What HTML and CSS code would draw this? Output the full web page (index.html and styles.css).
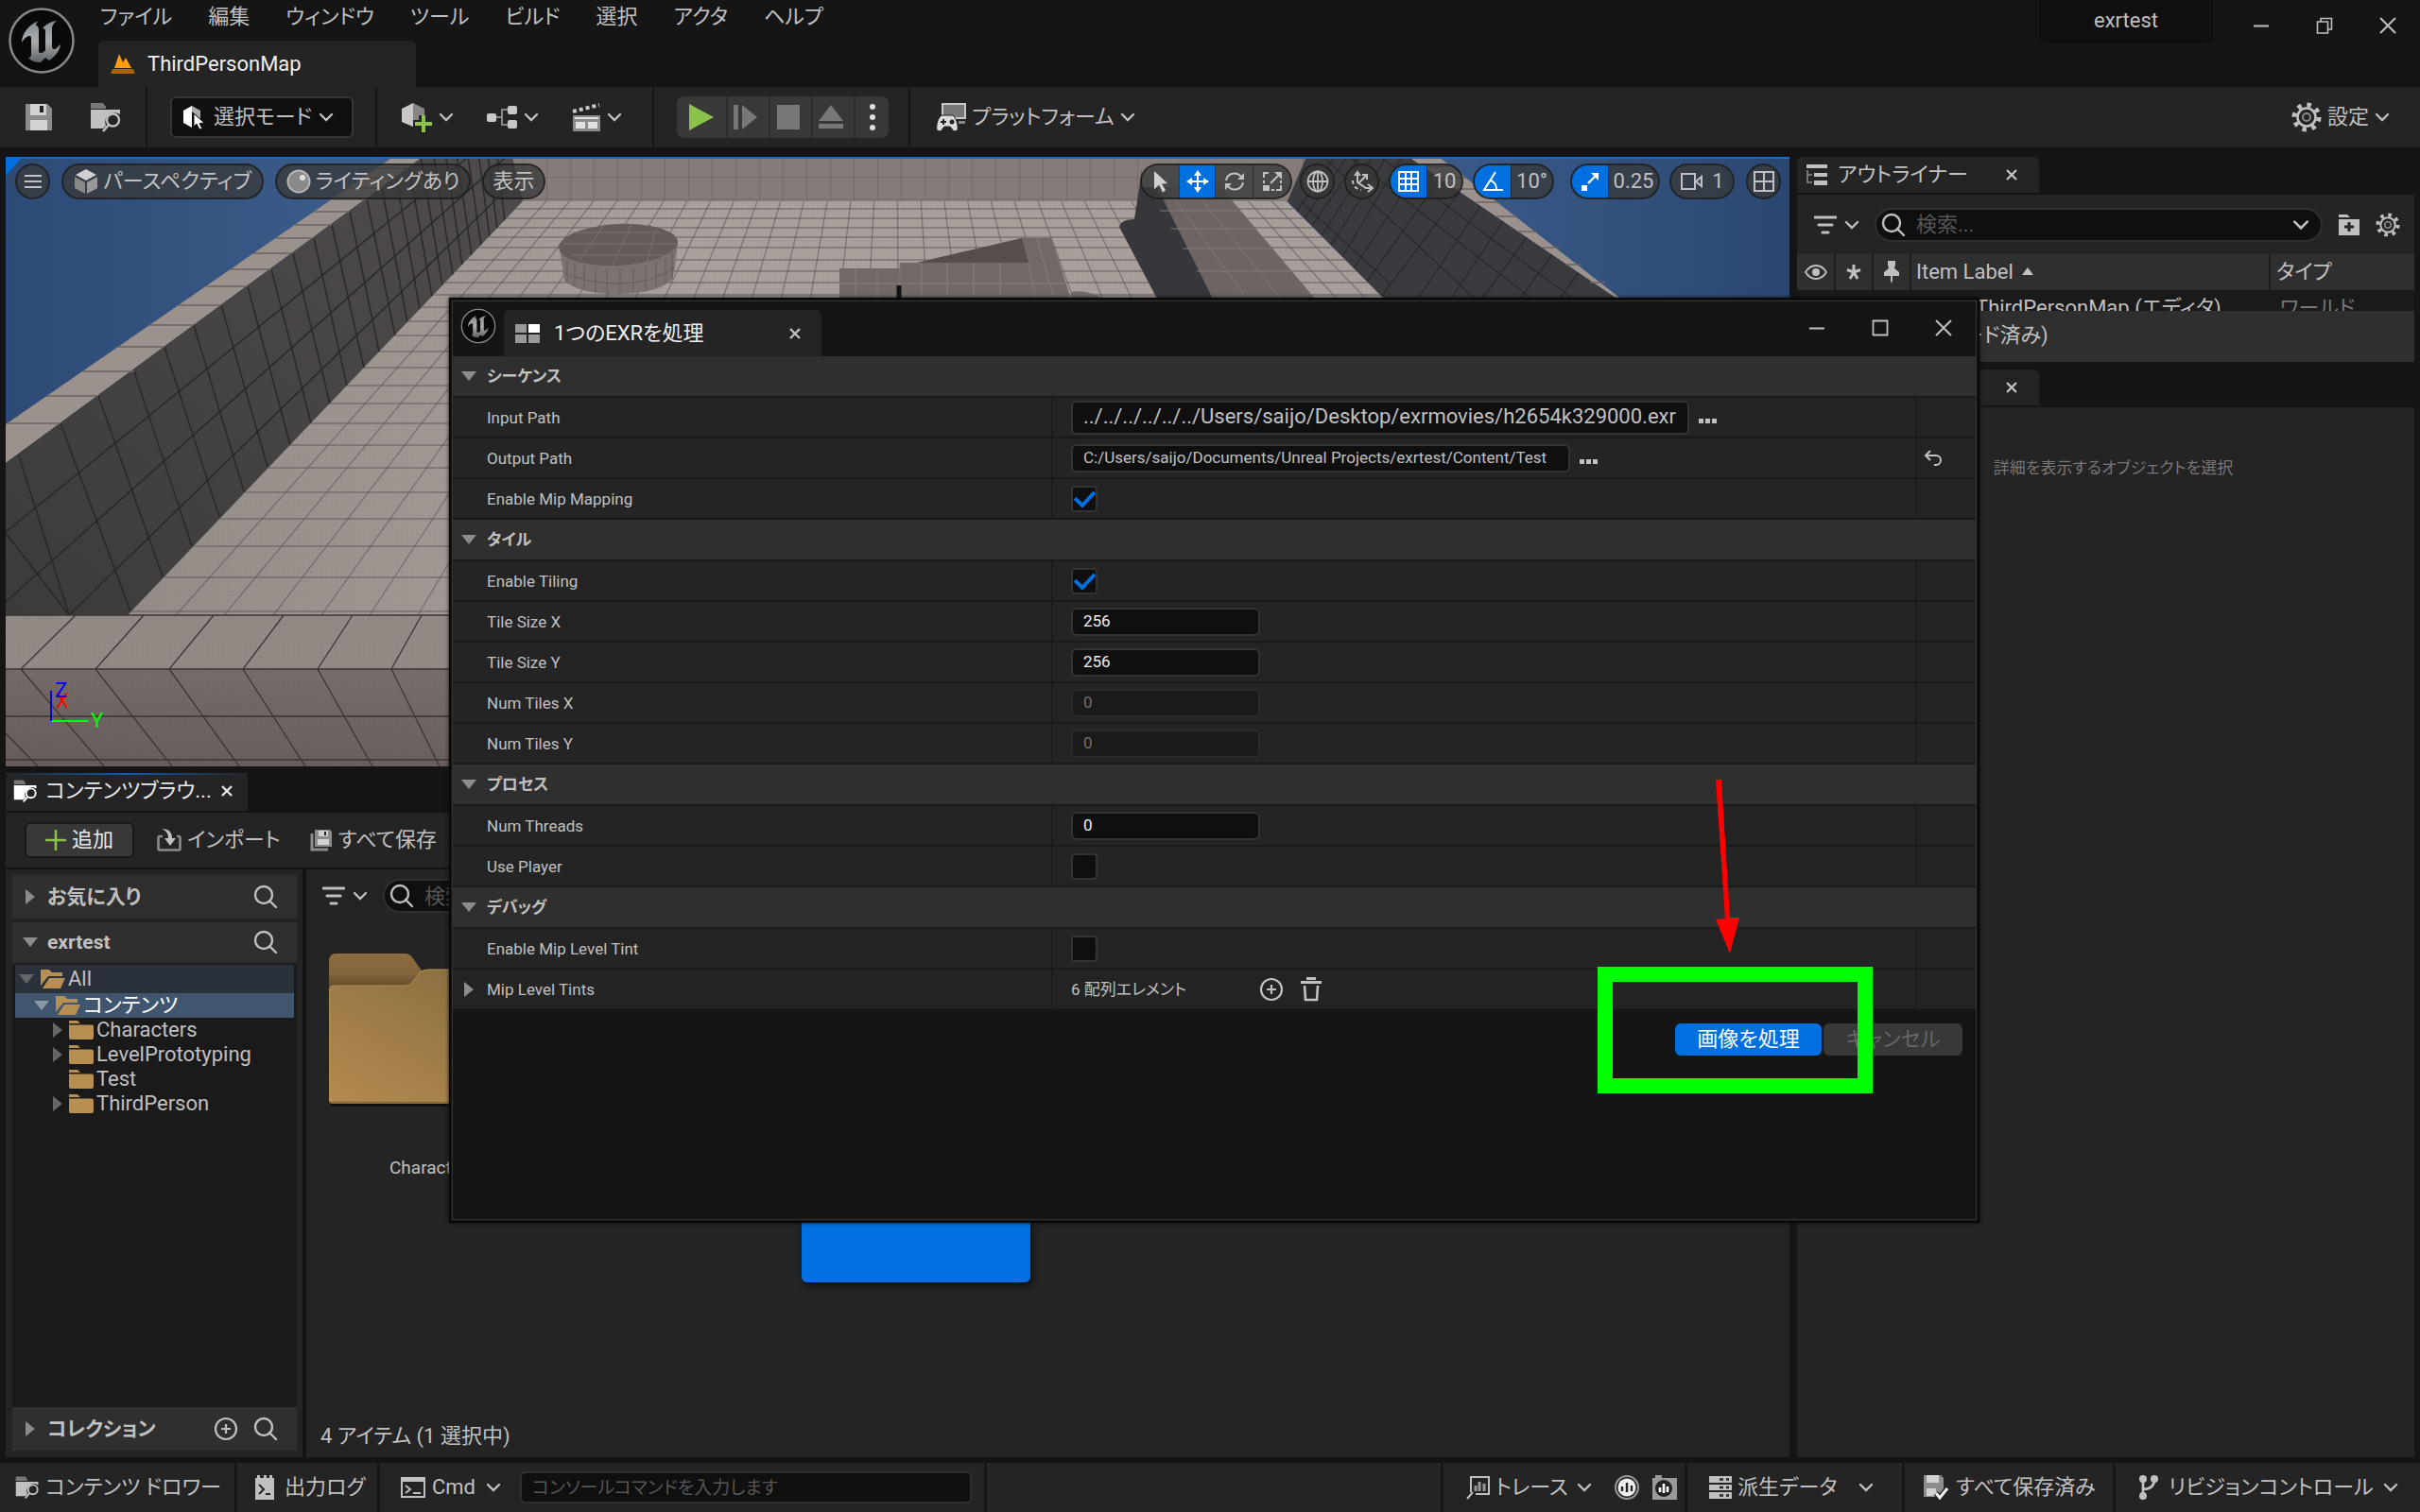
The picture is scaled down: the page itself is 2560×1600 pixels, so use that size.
FILE: index.html
```html
<!DOCTYPE html>
<html lang="ja">
<head>
<meta charset="utf-8">
<title>exrtest</title>
<link rel="stylesheet" href="styles.css">
</head>
<body>
<svg class="defs" aria-hidden="true">
  <defs>
    <linearGradient id="metal" x1="0" y1="0" x2="0" y2="1"><stop offset="0" stop-color="#868b8e"/><stop offset=".5" stop-color="#a9adaf"/><stop offset="1" stop-color="#5c6164"/></linearGradient>
  </defs>
  <symbol id="i-logo" viewBox="0 0 72 72">
    <circle cx="36" cy="36" r="33.500" fill="#090909" stroke="#85898b" stroke-width="2.500"/>
    <path fill="url(#metal)" d="M33 15C22 19 15 29 15 38c3-5 6-7 8-7 2 0 2 1 2 4v15c0 3-1 4-3 4 3 4 8 5 13 5l5-5 4 3c6-4 11-10 12-17-3 3-5 5-7 5-1 0-2-1-2-3V23c0-3 2-6 5-8-7 1-12 4-15 8 2 0 3 1 3 3v20c-1 2-3 3-5 3-2 0-2-1-2-3V25c0-4-2-5-3-5 0-2 1-4 3-5z"/>
  </symbol>
  <symbol id="i-chev" viewBox="0 0 16 16"><path d="M2 5l6 6 6-6" fill="none" stroke="currentColor" stroke-width="2.400" stroke-linecap="round"/></symbol>
  <symbol id="i-x" viewBox="0 0 16 16"><path d="M3 3l10 10M13 3L3 13" stroke="currentColor" stroke-width="2.400"/></symbol>
  <symbol id="i-close" viewBox="0 0 20 20"><path d="M2 2l16 16M18 2L2 18" stroke="currentColor" stroke-width="2"/></symbol>
  <symbol id="i-min" viewBox="0 0 20 20"><path d="M2 10.500h16" stroke="currentColor" stroke-width="2"/></symbol>
  <symbol id="i-max" viewBox="0 0 20 20"><path d="M2.500 2.500h15v15h-15z" fill="none" stroke="currentColor" stroke-width="1.800"/></symbol>
  <symbol id="i-restore" viewBox="0 0 20 20"><path d="M2.500 6h11v12h-11zM6 6V2.500h11.500V14H13.500" fill="none" stroke="currentColor" stroke-width="1.600"/></symbol>
  <symbol id="i-level" viewBox="0 0 28 22"><path fill="#ff9d0a" d="M5 15L10 0l4 9 3-5 6 11z"/><path fill="#a86208" d="M3 16h22l2 5H1z"/></symbol>
  <symbol id="i-save" viewBox="0 0 30 30"><path fill="#8c8c8c" d="M1 1h23l5 5v23H1z"/><path fill="#d2d2d2" d="M6 1h17v12H6zM6 18h18v11H6z"/><path fill="#222" d="M16 3h4v7h-4z"/></symbol>
  <symbol id="i-find" viewBox="0 0 34 32"><path fill="#777" d="M1 1h13l3 4v2H1z"/><path fill="currentColor" d="M1 8h31v5a10 10 0 0 0-15 12l-3 3H1z"/><circle cx="24.500" cy="19" r="6.500" fill="none" stroke="currentColor" stroke-width="2.400"/><path d="M20 24l-6 7" stroke="currentColor" stroke-width="2.600"/></symbol>
  <symbol id="i-mode" viewBox="0 0 26 26"><path fill="#fff" d="M1 6l9-5v23l-9-5z"/><path fill="#aaa" d="M10 1l9 5v9l-9-8z"/><path fill="#fff" stroke="#0f0f0f" d="M12 9l11 10-5 .5 3 5.500-3 1-3-6-3 3z"/></symbol>
  <symbol id="i-addcube" viewBox="0 0 34 32"><path fill="#c8c8c8" d="M1 7l12-6v25L1 21z"/><path fill="#868686" d="M13 1l12 6v7h-6v5h-6z"/><path fill="#8bc34a" d="M22 14h4v7h7v4h-7v7h-4v-7h-7v-4h7z"/></symbol>
  <symbol id="i-graph" viewBox="0 0 34 26"><path d="M9 13h8M24 5h-7v16h7" fill="none" stroke="#888" stroke-width="2"/><g fill="#c8c8c8"><rect x="1" y="9" width="10" height="9" rx="2"/><rect x="23" y="1" width="10" height="9" rx="2"/><rect x="23" y="16" width="10" height="9" rx="2"/></g></symbol>
  <symbol id="i-clap" viewBox="0 0 32 32"><path d="M2 10L30 3" stroke="#c8c8c8" stroke-width="4" stroke-dasharray="4 3"/><path fill="#8c8c8c" d="M2 14h29v17H2z"/><path fill="#e0e0e0" d="M5 21h10v7H5zM18 21h10v7H18zM4 16h25v2H4z"/></symbol>
  <symbol id="i-play" viewBox="0 0 28 28"><path fill="#8bc34a" d="M1 0l26 14L1 28z"/></symbol>
  <symbol id="i-step" viewBox="0 0 26 26"><path fill="#777" d="M0 0h5v26H0zM9 0l16 13L9 26z"/></symbol>
  <symbol id="i-stop" viewBox="0 0 26 26"><path fill="#777" d="M1 0h24v26H1z"/></symbol>
  <symbol id="i-eject" viewBox="0 0 26 26"><path fill="#777" d="M13 0l13 17H0zM0 20h26v5H0z"/></symbol>
  <symbol id="i-dots" viewBox="0 0 8 28"><g fill="#ddd"><circle cx="4" cy="3" r="3"/><circle cx="4" cy="14" r="3"/><circle cx="4" cy="25" r="3"/></g></symbol>
  <symbol id="i-platform" viewBox="0 0 32 32"><path fill="#777" stroke="#c8c8c8" stroke-width="2" d="M7 2h24v15H7z"/><path fill="#888" d="M24 20h7v3h-7z"/><path fill="#dcdcdc" stroke="#242424" d="M6 14h12c3 3 6 9 5 16l-4 1-4-5H9l-4 5-4-1c-1-6 1-13 5-16z"/><path d="M5 21h6M8 18v6" stroke="#242424" stroke-width="2"/><circle cx="17" cy="21" r="2.500" fill="#242424"/></symbol>
  <symbol id="i-gear" viewBox="0 0 32 32"><circle cx="16" cy="16" r="13" fill="none" stroke="currentColor" stroke-width="5" stroke-dasharray="4.400 5.810"/><circle cx="16" cy="16" r="9.500" fill="none" stroke="currentColor" stroke-width="2.600"/><circle cx="16" cy="16" r="4" fill="none" stroke="#888" stroke-width="2"/></symbol>
  <symbol id="i-burger" viewBox="0 0 20 16"><path d="M1 2h18M1 8h18M1 14h18" stroke="currentColor" stroke-width="2"/></symbol>
  <symbol id="i-cube" viewBox="0 0 26 26"><path fill="#d0d0d0" d="M13 0l11 6-11 6L2 6z"/><path fill="#888" d="M1 8l11 6v12L1 20z"/><path fill="#999" d="M25 8l-11 6v12l11-6z"/></symbol>
  <symbol id="i-ball" viewBox="0 0 26 26"><circle cx="13" cy="13" r="11.500" fill="#8a8a8a" stroke="#b5b5b5" stroke-width="2"/><circle cx="17" cy="9" r="3" fill="#e0e0e0"/></symbol>
  <symbol id="i-cursor" viewBox="0 0 16 24"><path fill="#d0d0d0" d="M1 1l14 13-6 .5 4 7-3 2-4-8-5 5z"/></symbol>
  <symbol id="i-move" viewBox="0 0 24 24"><path d="M12 2v20M2 12h20" stroke="#fff" stroke-width="2"/><path fill="#fff" d="M12 0l4 6H8zM12 24l4-6H8zM0 12l6-4v8zM24 12l-6-4v8z"/></symbol>
  <symbol id="i-rotate" viewBox="0 0 24 24"><path d="M3 11a9 9 0 0 1 16-4M21 13a9 9 0 0 1-16 4" fill="none" stroke="currentColor" stroke-width="2"/><path fill="currentColor" d="M22 3v7h-7zM2 21v-7h7z"/></symbol>
  <symbol id="i-scale" viewBox="0 0 24 24"><path d="M3 8V3h5M16 21h5v-5M10 14l8-8M3 11v3M11 21h3M21 11v3" fill="none" stroke="currentColor" stroke-width="2"/><path fill="currentColor" d="M22 2v8l-8-8zM2 16h7v6H2z"/></symbol>
  <symbol id="i-globe" viewBox="0 0 24 24"><g fill="none" stroke="currentColor" stroke-width="1.800"><circle cx="12" cy="12" r="10.500"/><ellipse cx="12" cy="12" rx="5" ry="10.500"/><path d="M2 12h20M12 2v20"/></g></symbol>
  <symbol id="i-snap" viewBox="0 0 24 24"><g fill="none" stroke="currentColor" stroke-width="2"><path d="M7 3v10l9 6h6M9 13l7-7M4 6l3-4 3 4M12 5h5v5M18 15l5 4-5 4"/><path d="M2 11c0 5 3 9 9 10" stroke-dasharray="4 3"/></g></symbol>
  <symbol id="i-grid" viewBox="0 0 24 24"><g fill="none" stroke="#fff" stroke-width="2"><path d="M2 2h20v20H2zM9 2v20M15 2v20M2 9h20M2 15h20"/></g></symbol>
  <symbol id="i-angle" viewBox="0 0 24 24"><path d="M15 2L3 21h20M10 11c5 2 6 5 6 10" fill="none" stroke="#fff" stroke-width="2"/></symbol>
  <symbol id="i-snapscale" viewBox="0 0 24 24"><path d="M10 14L18 6" stroke="#fff" stroke-width="2.400"/><path fill="#fff" d="M21 3v8l-8-8zM3 16h6v6H3z"/></symbol>
  <symbol id="i-cam" viewBox="0 0 26 20"><path d="M2 2h14v16H2zM17 10l6-5v10z" fill="none" stroke="currentColor" stroke-width="2"/></symbol>
  <symbol id="i-quad" viewBox="0 0 24 24"><path d="M2 2h20v20H2zM12 2v20M2 12h20" fill="none" stroke="currentColor" stroke-width="2"/></symbol>
  <symbol id="i-outliner" viewBox="0 0 24 24"><path fill="currentColor" d="M1 1h22v4H1zM9 10h14v4H9zM9 18h14v5H9z"/><path d="M2 7v13h5M2 12h5" fill="none" stroke="#888" stroke-width="1.600"/></symbol>
  <symbol id="i-filter" viewBox="0 0 24 20"><path d="M1 2h22M5 10h14M9 18h6" stroke="currentColor" stroke-width="3" stroke-linecap="round"/></symbol>
  <symbol id="i-search" viewBox="0 0 26 26"><circle cx="11" cy="11" r="9" fill="none" stroke="currentColor" stroke-width="2.400"/><path d="M17 17l7 7" stroke="currentColor" stroke-width="2.400" stroke-linecap="round"/></symbol>
  <symbol id="i-newfolder" viewBox="0 0 24 22"><path fill="currentColor" d="M1 0h9l3 3H1zM1 5h22v17H1z"/><path d="M12 8v10M7 13h10" stroke="#242424" stroke-width="3"/></symbol>
  <symbol id="i-eye" viewBox="0 0 24 18"><path d="M1 9c3-5 7-7 11-7s8 2 11 7c-3 5-7 7-11 7S4 14 1 9z" fill="none" stroke="currentColor" stroke-width="1.800"/><circle cx="12" cy="9" r="4" fill="currentColor"/></symbol>
  <symbol id="i-star" viewBox="0 0 16 16"><path d="M8 8V0M8 8L1 5.500M8 8l7-2.500M8 8l-4 7M8 8l4 7" stroke="currentColor" stroke-width="3"/></symbol>
  <symbol id="i-pin" viewBox="0 0 16 24"><path fill="currentColor" d="M4 0h8v4l-1 4 5 4v4H0v-4l5-4-1-4zM7 16h2v5l-1 3-1-3z"/></symbol>
  <symbol id="i-up" viewBox="0 0 14 10"><path fill="currentColor" d="M7 1l6 8H1z"/></symbol>
  <symbol id="i-down" viewBox="0 0 16 10"><path fill="currentColor" d="M0 0h16l-8 10z"/></symbol>
  <symbol id="i-right" viewBox="0 0 10 16"><path fill="currentColor" d="M0 0l10 8-10 8z"/></symbol>
  <symbol id="i-plus" viewBox="0 0 22 22"><path d="M11 1v20M1 11h20" stroke="#8bc34a" stroke-width="2.600" stroke-linecap="round"/></symbol>
  <symbol id="i-import" viewBox="0 0 26 26"><path d="M6 9H3q-1.500 0-1.500 1.500V22q0 1.500 1.500 1.500h20q1.500 0 1.500-1.500V10.500Q24.500 9 23 9h-2" fill="none" stroke="#8c8c8c" stroke-width="2.600"/><path fill="currentColor" d="M5 1c8 0 11 4 11 10h4l-6 8-6-8h4c0-5-2-8-7-10z"/></symbol>
  <symbol id="i-saveall" viewBox="0 0 24 24"><path d="M2 5v17h17" fill="none" stroke="#8c8c8c" stroke-width="3"/><path fill="#8c8c8c" d="M5 1h16l2 2v16H5z"/><path fill="#d2d2d2" d="M9 2h10v6H9zM8 11h12v6H8z"/><path fill="#222" d="M15 3h2v4h-2z"/></symbol>
  <symbol id="i-open" viewBox="0 0 26 20"><path fill="#b88f52" d="M0 0h9l3 3h11v4H8L0 17zM9 9h17l-5 11H2z"/></symbol>
  <symbol id="i-folder" viewBox="0 0 26 20"><path fill="#b88f52" d="M0 0h9l3 3H0zM0 4.500h24q2 0 2 2V18q0 2-2 2H2q-2 0-2-2z"/></symbol>
  <symbol id="i-addc" viewBox="0 0 26 26"><circle cx="13" cy="13" r="11" fill="none" stroke="currentColor" stroke-width="2.200"/><path d="M13 8v10M8 13h10" stroke="currentColor" stroke-width="2.200"/></symbol>
  <symbol id="i-trash" viewBox="0 0 24 26"><path fill="currentColor" d="M7 0h10v3H7zM1 4h22v3H1z"/><path d="M5 9l1 15h12l1-15" fill="none" stroke="currentColor" stroke-width="2.600"/></symbol>
  <symbol id="i-reset" viewBox="0 0 20 18"><path d="M3 6h10a5 5 0 0 1 0 10h-2M7 1L2 6l5 5" fill="none" stroke="currentColor" stroke-width="2"/></symbol>
  <symbol id="i-win" viewBox="0 0 26 20"><path fill="#999" d="M0 0h12v9H0zM0 11h12v9H0zM14 11h12v9H14z"/><path fill="#fff" d="M14 0h12v9H14z"/></symbol>
  <symbol id="i-log" viewBox="0 0 20 26"><path fill="currentColor" d="M0 3h2V0h3v3h4V0h3v3h3V0h3v3h2v23H0z"/><path d="M4 10l5 5-5 5M11 20h5" fill="none" stroke="#242424" stroke-width="2"/></symbol>
  <symbol id="i-cmd" viewBox="0 0 26 22"><path d="M1 1h24v20H1z" fill="none" stroke="currentColor" stroke-width="2"/><path fill="currentColor" d="M1 1h24v4H1z"/><path d="M5 9l5 4-5 4M13 17h8" fill="none" stroke="currentColor" stroke-width="2"/></symbol>
  <symbol id="i-trace" viewBox="0 0 26 26"><path d="M5 18V2h19v18H10M7 18l-6 7" fill="none" stroke="currentColor" stroke-width="2"/><path d="M10 17v-6M14 17V7M19 17V9" stroke="#999" stroke-width="3"/></symbol>
  <symbol id="i-rec" viewBox="0 0 26 26"><circle cx="13" cy="13" r="12" fill="none" stroke="#999" stroke-width="2"/><circle cx="13" cy="13" r="9.500" fill="#eee"/><path d="M8 17v-5M13 18V8M18 17v-6" stroke="#222" stroke-width="2.400"/></symbol>
  <symbol id="i-snapshot" viewBox="0 0 26 26"><path fill="#999" d="M3 0h7v3h16v23H0V3h3z"/><circle cx="12" cy="14" r="9" fill="#222"/><path d="M8 18v-5M12 19V9M16 18v-6" stroke="#fff" stroke-width="2.600"/></symbol>
  <symbol id="i-server" viewBox="0 0 24 24"><path fill="currentColor" d="M0 0h24v7H0zM0 9h24v6H0zM0 17h24v7H0z"/><path d="M11 3.500h4M18 3.500h3M11 12h4M18 12h3M11 20.500h4M18 20.500h3" stroke="#242424" stroke-width="2.400"/></symbol>
  <symbol id="i-saved" viewBox="0 0 26 26"><path fill="#8c8c8c" d="M0 0h18l3 3v12l-7 8H0z"/><path fill="#d2d2d2" d="M3 0h13v8H3zM3 14h10v8H3z"/><path fill="none" stroke="#242424" stroke-width="6" d="M13 19l4 5 8-10"/><path fill="none" stroke="#eee" stroke-width="3" d="M13 19l4 5 8-10"/></symbol>
  <symbol id="i-branch" viewBox="0 0 22 26"><path d="M5 4v18M5 15q12 0 12-11" fill="none" stroke="currentColor" stroke-width="2.600"/><g fill="currentColor"><circle cx="5" cy="4" r="4"/><circle cx="17" cy="4" r="4"/><circle cx="5" cy="22" r="4"/></g></symbol>
</svg>

<div class="app">
  <header class="titlebar">
    <svg class="logo"><use href="#i-logo"/></svg>
    <div class="title-main">
      <nav class="menu">
        <button>ファイル</button><button>編集</button><button>ウィンドウ</button><button>ツール</button><button>ビルド</button><button>選択</button><button>アクタ</button><button>ヘルプ</button>
      </nav>
      <div class="map-tab"><svg class="w28 h22"><use href="#i-level"/></svg><span>ThirdPersonMap</span></div>
    </div>
    <div class="project">exrtest</div>
    <div class="winctl">
      <button aria-label="最小化"><svg class="s20"><use href="#i-min"/></svg></button>
      <button aria-label="元に戻す"><svg class="s20"><use href="#i-restore"/></svg></button>
      <button aria-label="閉じる"><svg class="s20"><use href="#i-close"/></svg></button>
    </div>
  </header>

  <div class="toolbar">
    <div class="tb-group files">
      <button aria-label="保存"><svg class="s30"><use href="#i-save"/></svg></button>
      <button aria-label="コンテンツを参照"><svg class="w34 h32"><use href="#i-find"/></svg></button>
    </div>
    <div class="tb-group modes">
      <button class="mode"><svg class="s26"><use href="#i-mode"/></svg><span>選択モード</span><svg class="s16"><use href="#i-chev"/></svg></button>
    </div>
    <div class="tb-group adders">
      <button aria-label="追加"><svg class="w34 h32"><use href="#i-addcube"/></svg><svg class="s16"><use href="#i-chev"/></svg></button>
      <button aria-label="ブループリント"><svg class="w34 h26"><use href="#i-graph"/></svg><svg class="s16"><use href="#i-chev"/></svg></button>
      <button aria-label="シネマティクス"><svg class="s32"><use href="#i-clap"/></svg><svg class="s16"><use href="#i-chev"/></svg></button>
    </div>
    <div class="tb-group player">
      <div class="playbox">
        <button class="play" aria-label="プレイ"><svg class="s28"><use href="#i-play"/></svg></button>
        <button aria-label="コマ送り"><svg class="s26"><use href="#i-step"/></svg></button>
        <button aria-label="停止"><svg class="s26"><use href="#i-stop"/></svg></button>
        <button aria-label="イジェクト"><svg class="s26"><use href="#i-eject"/></svg></button>
        <button class="more" aria-label="オプション"><svg class="w8 h28"><use href="#i-dots"/></svg></button>
      </div>
    </div>
    <div class="tb-group platform">
      <button><svg class="s32"><use href="#i-platform"/></svg><span>プラットフォーム</span><svg class="s16"><use href="#i-chev"/></svg></button>
    </div>
    <button class="settings"><svg class="s32"><use href="#i-gear"/></svg><span>設定</span><svg class="s16"><use href="#i-chev"/></svg></button>
  </div>

  <main class="workspace">
    <div class="left">
      <section class="viewport">
        <svg class="scene" viewBox="6 166 1887 645" preserveAspectRatio="none" aria-hidden="true">
          <defs>
            <linearGradient id="sky" x1="0" y1="0" x2="1" y2="0"><stop offset="0" stop-color="#2d4a75"/><stop offset=".25" stop-color="#40618f"/><stop offset=".8" stop-color="#3c5b8a"/><stop offset="1" stop-color="#2b4770"/></linearGradient>
            <linearGradient id="wall" x1="0" y1="1" x2="1" y2="0"><stop offset="0" stop-color="#3d3a3a"/><stop offset="1" stop-color="#504c4c"/></linearGradient>
            <linearGradient id="floor" x1="0" y1="0" x2="1" y2="0"><stop offset="0" stop-color="#958c88"/><stop offset=".35" stop-color="#aaa19d"/><stop offset="1" stop-color="#a79e99"/></linearGradient>
            <linearGradient id="front" x1="0" y1="1" x2="1" y2="0"><stop offset="0" stop-color="#665d5a"/><stop offset="1" stop-color="#827976"/></linearGradient>
            <pattern id="bricks" width="25" height="23" x="553" y="165" patternUnits="userSpaceOnUse"><path d="M0 0v23M0 23h25" stroke="#665e5c"/></pattern>
            <pattern id="fine" width="5" height="5" patternUnits="userSpaceOnUse"><path d="M0 0h5M0 0v5" stroke="#000" stroke-opacity=".04"/></pattern>
            <clipPath id="c-floor"><path d="M553 213H1361L1893 745V651H135z"/></clipPath>
            <clipPath id="c-lwall"><path d="M447 166H542L553 213 135 651H6V490z"/></clipPath>
            <clipPath id="c-rwall"><path d="M1382 166H1490L1709 315 1893 440V745L1362 213z"/></clipPath>
            <clipPath id="c-slab"><path d="M1213 200H1290L1391 315H1283z"/></clipPath>
          </defs>
          <path fill="url(#sky)" d="M6 166H1893V811H6z"/>
          <path fill="#9c928d" d="M416 166H447L6 490V449z"/>
          <path fill="url(#wall)" d="M447 166H542L553 213 135 651H6V490z"/>
          <path fill="#857c79" d="M542 166H1382L1362 213H553z"/>
          <path fill="url(#bricks)" d="M542 166H1382L1362 213H553z"/>
          <path fill="url(#floor)" d="M553 213H1361L1800 651H135z"/>
          <path fill="url(#fine)" d="M553 213H1361L1800 651H135z"/>
          <g clip-path="url(#c-floor)" fill="none" stroke="#5a5250" stroke-opacity=".55" stroke-width="1.300">
            <path d="M947-200L186 651M947-200L237 651M947-200L289 651M947-200L340 651M947-200L391 651M947-200L442 651M947-200L493 651M947-200L544 651M947-200L595 651M947-200L646 651M947-200L697 651M947-200L748 651M947-200L799 651M947-200L850 651M947-200L901 651M947-200L952 651M947-200L1003 651M947-200L1054 651M947-200L1105 651M947-200L1156 651M947-200L1207 651M947-200L1258 651M947-200L1309 651M947-200L1360 651M947-200L1411 651M947-200L1462 651M947-200L1513 651M947-200L1564 651M947-200L1615 651M947-200L1666 651M947-200L1717 651M947-200L1768 651"/>
            <path d="M0 221H1893M0 231H1893M0 241H1893M0 251H1893M0 262H1893M0 275H1893M0 287H1893M0 299H1893M0 312H1893M0 325H1893M0 340H1893M0 355H1893M0 372H1893M0 389H1893M0 408H1893M0 427H1893M0 448H1893M0 471H1893M0 495H1893M0 521H1893M0 549H1893M0 578H1893M0 611H1893M0 647H1893"/>
          </g>
          <g clip-path="url(#c-lwall)" fill="none" stroke="#252323" stroke-opacity=".8" stroke-width="1.600">
            <path d="M6 563L947-200M6 637L947-200M73 651L947-200"/>
            <path d="M20 482L73 651M6 564L73 651M64 448L138 647M104 419L172 610M142 393L203 578M174 367L232 547M205 344L258 520M234 323L283 494M262 303L307 471M287 285L329 448M310 268L349 427M332 252L367 408M351 238L385 389M370 224L401 372M388 211L418 355M404 199L431 341M419 188L444 327M433 178L457 314M445 166L468 302M458 160L479 291M470 155L489 280M481 150L499 270M492 145L509 260M503 140L518 250M513 140L526 242M523 140L534 234"/>
          </g>
          <path fill="none" stroke="#6c6360" stroke-width="1.300" d="M64 448H8M104 419H49M142 393H87M174 367H125M205 344H158M234 323H189M262 303H218M287 285H244M310 268H268M332 252H291M351 238H312M370 224H332M388 211H351M404 199H368M419 188H384M433 178H399"/>
          <path fill="#938a86" d="M6 651H1893V708H6z"/>
          <path fill="url(#front)" d="M6 708H1893V811H6z"/>
          <path fill="url(#fine)" d="M6 651H480V811H6z"/>
          <path fill="none" stroke="#3d3534" stroke-width="1.300" d="M6 651H480M6 708H480M6 758H480M6 804H480M80 651L22 708 110 811M152 651L101 708 182 811M226 651L179 708 253 811M300 651L257 708 323 811M373 651L336 708 394 811M446 651L414 708 465 811M6 776L40 811"/>
          <path fill="#7c7370" d="M592 262L597 297Q612 311 654 311T712 295L717 258z"/>
          <ellipse cx="654" cy="259" rx="63" ry="22" fill="#655b59" transform="rotate(-3 654 259)"/>
          <path d="M600 275v24M608 279v24M618 282v25M630 283v27M642 284v27M656 284v27M670 283v27M683 281v27M694 277v27M704 272v27M711 267v27M596 288Q620 300 655 300T714 283" fill="none" stroke="#665c5a"/>
          <path d="M605 246H700M595 258H716M604 270H706M640 237L612 276M668 237L648 281M694 243L684 278" stroke="#7d7370" fill="none"/>
          <path fill="#726966" d="M888 284H952V278H970L1081 252H1112L1133 316H888z"/>
          <path fill="#564e4c" d="M970 278L1081 252 1088 278z"/>
          <path d="M905 284v32M928 284v32M952 278v38M975 278v38M1002 278v38M1030 278v38M1058 278v38M1088 278l8 38M888 300H1128M1097 252l18 64" stroke="#867c79" fill="none"/>
          <path fill="#746b68" d="M1133 316V309Q1150 306 1166 316z"/>
          <path d="M951 302v14" stroke="#111" stroke-width="5"/>
          <path fill="#37373b" d="M1184 240Q1186 232 1200 232L1208 180H1225L1283 316H1224z"/>
          <path fill="#6e6562" d="M1208 166H1265L1304 213 1391 316H1283z"/>
          <path clip-path="url(#c-slab)" d="M1200 223H1400M1200 242H1400M1200 263H1400M1200 287H1400M1235 200L1319 316M1262 200L1355 316" stroke="#827976" fill="none"/>
          <path fill="#857c79" d="M1208 166H1378L1362 213H1304L1290 198H1208z"/>
          <path fill="#3b3a3e" d="M1382 166H1490L1709 315 1800 380V651L1463 315 1362 213z"/>
          <g clip-path="url(#c-rwall)" fill="none" stroke="#232327" stroke-opacity=".7" stroke-width="1.300">
            <path d="M1400 166L1560 316M1428 166L1620 316M1460 166L1664 316M1376 213L1470 300"/>
            <path d="M1412 166L1372 223M1425 166L1380 231M1438 166L1388 239M1452 166L1398 249M1467 166L1408 260M1483 166L1420 272M1504 174L1432 284M1524 188L1446 298M1545 202L1462 313M1566 218L1500 316M1590 234L1535 316M1616 250L1568 316M1643 268L1608 316M1670 288L1650 316"/>
          </g>
          <path fill="#9c928d" d="M1490 166H1522L1893 455V500L1709 315z"/>
          <path fill="none" stroke="#6c6360" stroke-width="1.300" d="M1504 176H1534M1522 188H1550M1540 200H1566M1561 214H1584M1583 229H1604M1606 245H1626M1631 262H1649M1656 280H1673M1682 299H1698"/>
          <path fill="#0070e0" d="M6 166H1893V168H22L6 186z"/>
          <path fill="none" stroke="#0f0" stroke-width="2" d="M54 763H93"/>
          <path fill="none" stroke="#00f" stroke-width="2" d="M54 763V731"/>
          <g class="axis"><text x="59" y="749" fill="#f00">X</text><text x="58" y="738" fill="#00f">Z</text><text x="96" y="770" fill="#0f0">Y</text></g>
        </svg>
        <div class="vp-bar">
          <button class="pill round" aria-label="ビューポートオプション"><svg class="w20 h16"><use href="#i-burger"/></svg></button>
          <button class="pill persp"><svg class="s26"><use href="#i-cube"/></svg>パースペクティブ</button>
          <button class="pill lit"><svg class="s26"><use href="#i-ball"/></svg>ライティングあり</button>
          <button class="pill show">表示</button>
          <span class="grow"></span>
          <div class="pill tools">
            <button aria-label="選択"><svg class="w16 h24"><use href="#i-cursor"/></svg></button><button class="on" aria-label="移動"><svg class="s24"><use href="#i-move"/></svg></button><button aria-label="回転"><svg class="s24"><use href="#i-rotate"/></svg></button><button aria-label="拡大縮小"><svg class="s24"><use href="#i-scale"/></svg></button>
          </div>
          <button class="pill round near" aria-label="座標系"><svg class="s24"><use href="#i-globe"/></svg></button>
          <button class="pill round near" aria-label="サーフェススナップ"><svg class="s24"><use href="#i-snap"/></svg></button>
          <div class="pill snapgrid"><button class="on" aria-label="グリッドスナップ"><svg class="s24"><use href="#i-grid"/></svg></button><button>10</button></div>
          <div class="pill snapangle"><button class="on" aria-label="回転スナップ"><svg class="s24"><use href="#i-angle"/></svg></button><button>10°</button></div>
          <div class="pill snapscale"><button class="on" aria-label="スケールスナップ"><svg class="s24"><use href="#i-snapscale"/></svg></button><button>0.25</button></div>
          <button class="pill cam"><svg class="w26 h20"><use href="#i-cam"/></svg>1</button>
          <button class="pill round" aria-label="レイアウト"><svg class="s24"><use href="#i-quad"/></svg></button>
        </div>
      </section>

      <section class="browser">
        <div class="tab cb-tab"><svg class="w26 h26 white"><use href="#i-find"/></svg><span>コンテンツブラウ...</span><button aria-label="タブを閉じる"><svg class="s16"><use href="#i-x"/></svg></button></div>
        <div class="cb-tools">
          <button class="add"><svg class="s22"><use href="#i-plus"/></svg>追加</button>
          <button class="imp"><svg class="s26"><use href="#i-import"/></svg>インポート</button>
          <button class="sav"><svg class="s24"><use href="#i-saveall"/></svg>すべて保存</button>
        </div>
        <div class="cb-body">
          <aside class="sources">
            <div class="src-head fav"><svg class="w10 h16 tri"><use href="#i-right"/></svg><b>お気に入り</b><button aria-label="お気に入りを検索"><svg class="s26"><use href="#i-search"/></svg></button></div>
            <div class="src-head"><svg class="w16 h10 tri"><use href="#i-down"/></svg><b>exrtest</b><button aria-label="プロジェクトを検索"><svg class="s26"><use href="#i-search"/></svg></button></div>
            <ul class="tree">
              <li class="all"><svg class="w16 h10 tri"><use href="#i-down"/></svg><svg class="w26 h20"><use href="#i-open"/></svg>All</li>
              <li class="sel"><svg class="w16 h10 tri"><use href="#i-down"/></svg><svg class="w26 h20"><use href="#i-open"/></svg>コンテンツ</li>
              <li><svg class="w10 h16 tri"><use href="#i-right"/></svg><svg class="w26 h20"><use href="#i-folder"/></svg>Characters</li>
              <li><svg class="w10 h16 tri"><use href="#i-right"/></svg><svg class="w26 h20"><use href="#i-folder"/></svg>LevelPrototyping</li>
              <li><span class="w10"></span><svg class="w26 h20"><use href="#i-folder"/></svg>Test</li>
              <li><svg class="w10 h16 tri"><use href="#i-right"/></svg><svg class="w26 h20"><use href="#i-folder"/></svg>ThirdPerson</li>
            </ul>
            <div class="src-head fav"><svg class="w10 h16 tri"><use href="#i-right"/></svg><b>コレクション</b><button aria-label="コレクションを追加"><svg class="s26"><use href="#i-addc"/></svg></button><button aria-label="コレクションを検索"><svg class="s26"><use href="#i-search"/></svg></button></div>
          </aside>
          <div class="assets">
            <div class="asset-filter">
              <button aria-label="フィルタ"><svg class="w24 h20"><use href="#i-filter"/></svg><svg class="s16"><use href="#i-chev"/></svg></button>
              <label class="search"><svg class="s26"><use href="#i-search"/></svg><input type="text" placeholder="検索" aria-label="アセットを検索"></label>
            </div>
            <div class="tiles">
              <div class="tile">
                <svg class="bigfolder" viewBox="0 0 242 162" aria-hidden="true">
                  <defs><linearGradient id="fb" x1="0" y1="0" x2="0" y2="1"><stop offset="0" stop-color="#8a6d40"/><stop offset=".6" stop-color="#82663b"/><stop offset="1" stop-color="#5f4a2a"/></linearGradient><linearGradient id="ff" x1="0" y1="1" x2="1" y2="0"><stop offset="0" stop-color="#b48a50"/><stop offset="1" stop-color="#7f683c"/></linearGradient></defs>
                  <path fill="#111" d="M1 150h240v8q0 4-4 4H5q-4 0-4-4z"/>
                  <path fill="url(#fb)" d="M0 8q0-8 8-8h72q5 0 8 4l10 14v18H0z"/>
                  <path fill="#8a6a3a" d="M0 100h242v56q0 3-4 3H4q-4 0-4-3z"/>
                  <path fill="url(#ff)" stroke="#b18d56" d="M.500 38q0-4 4-4h76q5 0 8-4l8-10q3-3 8-3h132q5 0 5 5v134H.500z"/>
                </svg>
                <span>Characters</span>
              </div>
              <div class="tile"></div>
              <div class="tile selected"></div>
            </div>
            <div class="count">4 アイテム (1 選択中)</div>
          </div>
        </div>
      </section>
    </div>

    <div class="right">
      <section class="outliner">
        <div class="tab ol-tab"><svg class="s24"><use href="#i-outliner"/></svg><span>アウトライナー</span><button aria-label="タブを閉じる"><svg class="s16"><use href="#i-x"/></svg></button></div>
        <div class="ol-tools">
          <button aria-label="フィルタ"><svg class="w24 h20"><use href="#i-filter"/></svg><svg class="s16"><use href="#i-chev"/></svg></button>
          <label class="search"><svg class="s26"><use href="#i-search"/></svg><input type="text" placeholder="検索..." aria-label="アウトライナーを検索"><svg class="s18"><use href="#i-chev"/></svg></label>
          <button aria-label="フォルダを作成"><svg class="w24 h22"><use href="#i-newfolder"/></svg></button>
          <button aria-label="設定"><svg class="s26"><use href="#i-gear"/></svg></button>
        </div>
        <table class="ol-table">
          <thead><tr><th><svg class="w24 h18"><use href="#i-eye"/></svg></th><th><svg class="s16"><use href="#i-star"/></svg></th><th><svg class="w16 h24"><use href="#i-pin"/></svg></th><th class="name">Item Label <svg class="w14 h10"><use href="#i-up"/></svg></th><th class="type">タイプ</th></tr></thead>
          <tbody><tr><td></td><td></td><td></td><td class="map"><div>ThirdPersonMap (エディタ)</div></td><td class="world"><div>ワールド</div></td></tr></tbody>
        </table>
        <div class="ol-foot">ロード済み)</div>
      </section>
      <section class="details">
        <div class="tab ol-tab"><span></span><button aria-label="タブを閉じる"><svg class="s16"><use href="#i-x"/></svg></button></div>
        <p>詳細を表示するオブジェクトを選択</p>
      </section>
    </div>
  </main>

  <footer class="status">
    <button class="drawer"><svg class="s26"><use href="#i-find"/></svg>コンテンツ ドロワー</button>
    <button class="logbtn"><svg class="w20 h26"><use href="#i-log"/></svg>出力ログ</button>
    <div class="console">
      <svg class="w26 h22"><use href="#i-cmd"/></svg>
      <select aria-label="コンソールの種類"><option>Cmd</option></select>
      <svg class="s16"><use href="#i-chev"/></svg>
      <input type="text" placeholder="コンソールコマンドを入力します" aria-label="コンソールコマンド">
    </div>
    <span class="grow"></span>
    <div class="trace"><button><svg class="s26"><use href="#i-trace"/></svg>トレース<svg class="s16"><use href="#i-chev"/></svg></button><button aria-label="トレースを開始"><svg class="s26"><use href="#i-rec"/></svg></button><button aria-label="スナップショット"><svg class="s26"><use href="#i-snapshot"/></svg></button></div>
    <button class="ddc"><svg class="s24"><use href="#i-server"/></svg>派生データ<svg class="s16"><use href="#i-chev"/></svg></button>
    <button class="allsaved"><svg class="s26"><use href="#i-saved"/></svg>すべて保存済み</button>
    <button class="revision"><svg class="w22 h26"><use href="#i-branch"/></svg>リビジョンコントロール<svg class="s16"><use href="#i-chev"/></svg></button>
  </footer>
</div>

<div class="dialog" role="dialog" aria-label="1つのEXRを処理">
  <div class="dlg-title">
    <svg class="dlg-logo"><use href="#i-logo"/></svg>
    <div class="dlg-tab"><svg class="w26 h20"><use href="#i-win"/></svg><span>1つのEXRを処理</span><button aria-label="タブを閉じる"><svg class="s16"><use href="#i-x"/></svg></button></div>
    <div class="winctl">
      <button aria-label="最小化"><svg class="s20"><use href="#i-min"/></svg></button>
      <button aria-label="最大化"><svg class="s20"><use href="#i-max"/></svg></button>
      <button aria-label="閉じる"><svg class="s20"><use href="#i-close"/></svg></button>
    </div>
  </div>
  <form class="props">
    <h2><svg class="w16 h10 tri"><use href="#i-down"/></svg>シーケンス</h2>
    <div class="prop"><label for="f-in">Input Path</label><div><input id="f-in" class="big" type="text" value="../../../../../../Users/saijo/Desktop/exrmovies/h2654k329000.exr"><button type="button" class="browse" aria-label="入力パスを参照"><i></i><i></i><i></i></button></div><div></div></div>
    <div class="prop"><label for="f-out">Output Path</label><div><input id="f-out" class="path" type="text" value="C:/Users/saijo/Documents/Unreal Projects/exrtest/Content/Test"><button type="button" class="browse" aria-label="出力パスを参照"><i></i><i></i><i></i></button></div><div><button type="button" aria-label="デフォルトに戻す"><svg class="w20 h18"><use href="#i-reset"/></svg></button></div></div>
    <div class="prop"><label for="f-mip">Enable Mip Mapping</label><div><input id="f-mip" type="checkbox" checked></div><div></div></div>
    <h2><svg class="w16 h10 tri"><use href="#i-down"/></svg>タイル</h2>
    <div class="prop"><label for="f-til">Enable Tiling</label><div><input id="f-til" type="checkbox" checked></div><div></div></div>
    <div class="prop"><label for="f-tx">Tile Size X</label><div><input id="f-tx" class="num" type="text" value="256"></div><div></div></div>
    <div class="prop"><label for="f-ty">Tile Size Y</label><div><input id="f-ty" class="num" type="text" value="256"></div><div></div></div>
    <div class="prop"><label for="f-nx">Num Tiles X</label><div><input id="f-nx" class="num" type="text" value="0" disabled></div><div></div></div>
    <div class="prop"><label for="f-ny">Num Tiles Y</label><div><input id="f-ny" class="num" type="text" value="0" disabled></div><div></div></div>
    <h2><svg class="w16 h10 tri"><use href="#i-down"/></svg>プロセス</h2>
    <div class="prop"><label for="f-th">Num Threads</label><div><input id="f-th" class="num" type="text" value="0"></div><div></div></div>
    <div class="prop"><label for="f-pl">Use Player</label><div><input id="f-pl" type="checkbox"></div><div></div></div>
    <h2><svg class="w16 h10 tri"><use href="#i-down"/></svg>デバッグ</h2>
    <div class="prop"><label for="f-ti">Enable Mip Level Tint</label><div><input id="f-ti" type="checkbox"></div><div></div></div>
    <div class="prop nested"><span class="lbl"><svg class="w10 h16 tri"><use href="#i-right"/></svg>Mip Level Tints</span><div><span class="elements">6 配列エレメント</span><button type="button" aria-label="要素を追加"><svg class="s26"><use href="#i-addc"/></svg></button><button type="button" aria-label="すべて削除"><svg class="w24 h26"><use href="#i-trash"/></svg></button></div><div></div></div>
  </form>
  <div class="dlg-actions"><button class="primary">画像を処理</button><button disabled>キャンセル</button></div>
  <div class="mark"></div>
  <svg class="arrow" viewBox="0 0 30 184" aria-hidden="true"><path fill="#f00" d="M1 0h6l9 146h10L16 184 1 148l10-1z"/></svg>
</div>
</body>
</html>
```

FILE: styles.css
```css
* { box-sizing: border-box; }
html, body { height: 100%; }
body {
  margin: 0;
  overflow: hidden;
  background: #151515;
  color: #c0c0c0;
  font: 22px/28px Roboto, "Noto Sans CJK JP", sans-serif;
  font-feature-settings: "palt";
}
button, input, select { font: inherit; font-feature-settings: inherit; color: inherit; }
button { display: flex; align-items: center; padding: 0; border: 0; background: none; white-space: nowrap; }
svg { display: block; flex: none; }
.defs { position: absolute; width: 0; height: 0; }
.grow { flex: 1; }

.s16 { width: 16px; height: 16px; }
.s18 { width: 18px; height: 18px; }
.s20 { width: 20px; height: 20px; }
.s22 { width: 22px; height: 22px; }
.s24 { width: 24px; height: 24px; }
.s26 { width: 26px; height: 26px; }
.s28 { width: 28px; height: 28px; }
.s30 { width: 30px; height: 30px; }
.s32 { width: 32px; height: 32px; }
.w8 { width: 8px; }
.w10 { width: 10px; }
.w14 { width: 14px; }
.w16 { width: 16px; }
.w20 { width: 20px; }
.w22 { width: 22px; }
.w24 { width: 24px; }
.w26 { width: 26px; }
.w28 { width: 28px; }
.w34 { width: 34px; }
.h10 { height: 10px; }
.h16 { height: 16px; }
.h18 { height: 18px; }
.h20 { height: 20px; }
.h22 { height: 22px; }
.h24 { height: 24px; }
.h26 { height: 26px; }
.h28 { height: 28px; }
.h32 { height: 32px; }
.white { color: #fff; }
.tri { color: #8c8c8c; }

.app { height: 100vh; display: flex; flex-direction: column; }

/* title bar */
.titlebar { display: flex; height: 92px; flex: none; }
.logo { width: 72px; height: 72px; margin: 7px 0 0 8px; }
.title-main { flex: 1; padding-left: 24px; display: flex; flex-direction: column; justify-content: space-between; align-items: flex-start; }
.menu { display: flex; gap: 38px; padding: 4px 0 0 2px; }
.map-tab { display: flex; align-items: center; gap: 12px; width: 336px; height: 49px; padding-left: 12px; background: #242424; border-radius: 6px 6px 0 0; color: #f0f0f0; }
.project { width: 184px; height: 46px; background: #0f0f0f; border-radius: 0 0 8px 8px; text-align: center; line-height: 44px; }
.winctl { display: flex; gap: 47px; padding: 17px 24px 0 41px; align-items: flex-start; }

/* main toolbar */
.toolbar { display: flex; align-items: center; height: 64px; flex: none; background: #242424; }
.tb-group { display: flex; align-items: center; height: 64px; border-right: 2px solid #161616; }
.files { width: 156px; padding-left: 26px; gap: 39px; }
.modes { width: 243px; padding-left: 24px; }
.mode { width: 194px; height: 44px; padding-left: 11px; gap: 7px; background: #0f0f0f; border: 2px solid #353535; border-radius: 6px; }
.adders { width: 293px; padding-left: 25px; gap: 34px; }
.adders button { gap: 6px; }
.player { width: 271px; padding-left: 24px; }
.playbox { display: flex; width: 224px; height: 44px; background: #383838; border-radius: 8px; }
.playbox button { flex: 1; justify-content: center; padding-right: 5px; border-right: 2px solid #2b2b2b; }
.playbox .play { flex: none; width: 54px; padding-right: 0; }
.playbox .more { flex: none; width: 35px; padding: 0; border: 0; }
.platform { flex: 1; padding-left: 27px; border: 0; }
.platform button { gap: 6px; }
.settings { gap: 6px; margin-right: 32px; }

/* workspace */
.workspace { flex: 1; min-height: 0; display: flex; gap: 8px; padding: 10px 6px 6px; }
.left { flex: 1; min-width: 0; display: flex; flex-direction: column; gap: 7px; }
.right { width: 653px; display: flex; flex-direction: column; gap: 8px; }

.viewport { position: relative; height: 645px; flex: none; }
.scene { width: 100%; height: 100%; }
.axis { font-size: 22px; }
.vp-bar { position: absolute; left: 10px; right: 9px; top: 7px; display: flex; align-items: center; }
.pill { display: flex; align-items: center; height: 38px; margin-right: 12px; border: 2px solid rgba(20, 20, 20, .6); border-radius: 19px; background: rgba(56, 56, 56, .75); overflow: hidden; justify-content: center; }
.pill:last-child { margin-right: 0; }
.round { width: 37px; }
.near { margin-right: 10px; }
.persp, .lit { gap: 5px; }
.persp { width: 214px; }
.lit { width: 207px; }
.show { width: 67px; }
.tools { width: 161px; margin-right: 8px; }
.pill > button { flex: 1; height: 34px; justify-content: center; border-left: 1px solid rgba(20, 20, 20, .5); }
.pill > button:first-child { border-left: 0; }
.pill > .on { flex: none; width: 38px; background: #0070e0; }
.snapgrid { width: 79px; margin-right: 10px; }
.snapangle { width: 86px; margin-right: 17px; }
.snapscale { width: 95px; margin-right: 10px; }
.cam { width: 69px; gap: 8px; }

/* tabs */
.tab { display: flex; align-items: center; height: 40px; width: 256px; background: #242424; border-radius: 6px 6px 0 0; flex: none; }
.tab button { margin-left: auto; }
.tab span { white-space: nowrap; }

/* content browser */
.browser { flex: 1; min-height: 0; display: flex; flex-direction: column; }
.cb-tab { padding: 0 20px 4px 8px; gap: 8px; color: #e8e8e8; border-top: 2px solid; border-image: linear-gradient(90deg, #242424, #0a5cb8, #242424) 1; }
.cb-tools { display: flex; align-items: center; height: 58px; margin-top: 2px; padding-left: 20px; background: #242424; flex: none; }
.cb-tools button { gap: 6px; }
.cb-tools .add { width: 116px; height: 38px; justify-content: center; background: #383838; border: 2px solid #191919; border-radius: 6px; color: #e8e8e8; }
.imp { margin-left: 24px; }
.sav { margin-left: 31px; }
.cb-body { flex: 1; min-height: 0; display: flex; gap: 4px; margin-top: 2px; }
.sources { width: 314px; display: flex; flex-direction: column; background: #242424; padding: 6px 6px 7px 7px; }
.src-head { display: flex; align-items: center; height: 42px; padding: 0 20px 0 11px; background: #2f2f2f; gap: 10px; flex: none; }
.fav { height: 46px; padding-left: 14px; gap: 13px; }
.fav button + button { margin-left: 3px; }
.src-head b { flex: 1; font-size: 21px; font-weight: 700; }
.fav + .src-head { margin-top: 4px; }
.tree { flex: 1; margin: 2px 0 0; padding: 1px 3px; list-style: none; background: #1a1a1a; }
.tree li { display: flex; align-items: center; gap: 3px; height: 26px; padding-left: 40px; }
.tree .tri { color: #666; margin-right: 4px; }
.tree span { margin-right: 4px; }
.tree .all { height: 30px; padding-left: 4px; background: #2b313b; }
.tree .sel { padding-left: 20px; background: #40566f; color: #fff; }
.tree .sel .tri { color: #8a98a8; }
.assets { flex: 1; display: flex; flex-direction: column; background: #242424; }
.asset-filter { display: flex; gap: 16px; padding: 10px 14px 0 17px; }
.asset-filter button, .ol-tools button { gap: 8px; }
.search { flex: 1; display: flex; align-items: center; height: 36px; padding: 0 12px 0 5px; border: 2px solid #2f2f2f; border-radius: 18px; background: #0f0f0f; }
.search input { flex: 1; min-width: 0; height: 30px; margin-left: 7px; padding: 0 4px; border: 0; background: none; }
input::placeholder { color: #555; opacity: 1; }
.tiles { flex: 1; display: flex; gap: 8px; padding: 43px 24px 0; align-items: flex-start; }
.tile { width: 242px; }
.tile span { display: block; padding: 51px 0 0 64px; font-size: 19px; }
.bigfolder { width: 242px; height: 162px; }
.selected { height: 348px; background: #0070e0; border-radius: 0 0 6px 6px; box-shadow: 2px 4px 6px #111; }
.count { padding: 0 15px 8px; }

/* outliner */
.outliner { height: 217px; display: flex; flex-direction: column; flex: none; }
.ol-tab { padding: 0 21px 0 9px; gap: 10px; height: 38px; }
.ol-tools { display: flex; align-items: center; height: 63px; margin-top: 2px; padding: 0 15px 0 18px; gap: 16px; background: #242424; flex: none; }
.ol-table { width: 100%; table-layout: fixed; border-collapse: collapse; flex: none; }
.ol-table th { width: 40px; height: 38px; padding: 0; background: #2f2f2f; border-right: 2px solid #1e1e1e; font-weight: 400; text-align: left; }
.ol-table th svg { margin: 0 auto; }
.ol-table .name { width: auto; padding-left: 5px; }
.ol-table .name svg { display: inline-block; margin: 0 0 3px 3px; }
.ol-table .type { width: 153px; padding-left: 6px; border: 0; }
.ol-table td { padding: 0; background: #1a1a1a; }
.ol-table td div { height: 22px; padding-top: 5px; overflow: hidden; white-space: nowrap; }
.ol-table .map { padding-left: 69px; }
.ol-table .world { padding-left: 11px; color: #777; }
.ol-foot { flex: 1; min-height: 54px; padding: 12px 0 0 154px; background: #2f2f2f; }
.details { flex: 1; display: flex; flex-direction: column; }
.details p { flex: 1; margin: 2px 0 0; padding: 50px 0 0 16px; background: #242424; color: #777; font-size: 17px; text-align: center; }

/* status bar */
.status { display: flex; height: 52px; flex: none; background: #242424; }
.status > * { display: flex; align-items: center; border-right: 3px solid #161616; }
.status > .grow { border: 0; }
.drawer { width: 251px; padding-left: 16px; gap: 6px; }
.logbtn { width: 151px; padding-left: 19px; gap: 11px; }
.console { width: 642px; padding-left: 22px; gap: 7px; }
.console select { appearance: none; width: 50px; padding: 0; border: 0; background: none; }
.console input { flex: 1; height: 34px; margin: 0 13px 0 13px; padding: 0 11px; border: 2px solid #2f2f2f; border-radius: 6px; background: #0f0f0f; font-size: 19px; }
.trace { width: 261px; padding-left: 24px; gap: 14px; border-left: 3px solid #161616; }
.trace button { gap: 5px; }
.trace button:first-child { width: 143px; }
.trace button:first-child svg:last-child { margin-left: 4px; }
.ddc { width: 230px; padding-left: 23px; gap: 6px; }
.ddc svg:last-child { margin: 0 30px 0 auto; }
.allsaved { width: 223px; padding-left: 20px; gap: 8px; }
.status .revision { width: 322px; padding-left: 24px; gap: 10px; border: 0; }
.revision svg:last-child { margin: 0 29px 0 auto; }

/* EXR dialog window */
.dialog { position: absolute; left: 475px; top: 315px; width: 1619px; height: 979px; display: flex; flex-direction: column; background: #151515; border: 2px solid #0a0a0a; outline: 1px solid #333; outline-offset: -4px; box-shadow: 0 0 4px #0a0a0a; }
.dlg-title { display: flex; height: 60px; flex: none; padding-left: 10px; }
.dlg-logo { width: 38px; height: 38px; margin-top: 9px; }
.dlg-tab { display: flex; align-items: center; width: 336px; height: 49px; margin: 11px auto 0 8px; padding: 0 20px 0 12px; gap: 15px; background: #242424; border-radius: 6px 6px 0 0; color: #f0f0f0; }
.dlg-tab button { margin-left: auto; color: #c0c0c0; }
.dialog .winctl { padding: 20px 26px 0 0; }
.props { font-size: 17px; line-height: 24px; margin: 0 2px; }
.props h2 { display: flex; align-items: center; height: 44px; margin: 0; padding-left: 9px; gap: 11px; background: #2f2f2f; border-bottom: 2px solid #1a1a1a; font-size: 17px; font-weight: 700; }
.prop { display: grid; grid-template-columns: 633px 1fr 64px; height: 43px; background: #242424; border-bottom: 2px solid #1a1a1a; }
.prop > * { display: flex; align-items: center; }
.prop > label { padding-left: 36px; }
.prop .lbl { padding-left: 12px; gap: 14px; }
.prop > div { border-left: 2px solid #1c1c1c; padding-left: 19px; }
.prop > div:last-child { padding-left: 7px; }
.prop input[type="text"] { height: 30px; padding: 0 11px 2px; background: #0f0f0f; border: 2px solid #333; border-radius: 6px; }
.prop .num { width: 200px; color: #f0f0f0; }
.prop .num:disabled { background: #1a1a1a; border-color: #2a2a2a; color: #707070; }
.prop .path { width: 528px; }
.prop input.big { width: 654px; height: 36px; font-size: 22px; }
.prop input[type="checkbox"] { appearance: none; width: 28px; height: 28px; margin: 0; background: #0f0f0f; border: 2px solid #333; border-radius: 4px; display: grid; place-items: center; }
.prop input[type="checkbox"]:checked::after { content: ""; width: 17px; height: 9px; margin-top: -5px; border: solid #0070e0; border-width: 0 0 4px 4px; transform: rotate(-47deg); }
.browse { gap: 2px; padding: 8px 0 0 10px; }
.browse i { width: 5px; height: 5px; background: #c0c0c0; }
.elements { width: 199px; }
.elements + button { margin-right: 17px; }
.dlg-actions { display: flex; justify-content: flex-end; gap: 2px; padding: 14px 16px 0; }
.dlg-actions button { width: 147px; height: 34px; justify-content: center; background: #383838; border-radius: 6px; color: #666; }
.dlg-actions .primary { width: 155px; background: #0070e0; color: #fff; }
.mark { position: absolute; right: 111px; top: 706px; width: 291px; height: 134px; border: 16px solid #0f0; }
.arrow { position: absolute; right: 248px; top: 508px; width: 30px; height: 184px; }
```
